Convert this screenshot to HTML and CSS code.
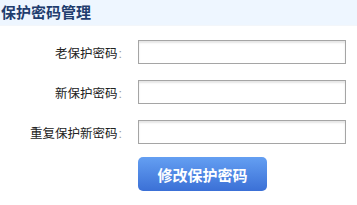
FILE: index.html
```html
<!DOCTYPE html>
<html lang="zh-CN">
<head>
  <meta charset="UTF-8" />
  <title>保护密码管理</title>
  <link rel="stylesheet" href="styles.css">
</head>
<body>
  <div class="title-bar">
    <h2>保护密码管理</h2>
  </div>

  <form class="pwd-form" onsubmit="return false;">
    <div class="row">
      <label for="oldPwd">老保护密码<span class="colon">:</span></label>
      <input type="password" id="oldPwd">
    </div>
    <div class="row">
      <label for="newPwd">新保护密码<span class="colon">:</span></label>
      <input type="password" id="newPwd">
    </div>
    <div class="row">
      <label for="rePwd">重复保护新密码<span class="colon">:</span></label>
      <input type="password" id="rePwd">
    </div>
    <div class="row">
      <span class="spacer"></span>
      <button type="submit">修改保护密码</button>
    </div>
  </form>
</body>
</html>
```

FILE: styles.css
```css
body {
  margin: 0;
  padding: 0;
  background: #fff;
  font-family: "Liberation Sans", "Noto Sans CJK SC", sans-serif;
  color: #222;
}
.title-bar {
  height: 25px;
  background: #eef6ff;
  border-bottom: 1px solid #f3f6fa;
}
.title-bar h2 {
  margin: 0;
  padding: 1px 0 0 1px;
  font-size: 15px;
  line-height: 24px;
  font-weight: bold;
  color: #1f3d6e;
}
.pwd-form {
  margin-top: 14px;
  display: flex;
  flex-direction: column;
  gap: 16px;
}
.row {
  display: flex;
  align-items: center;
  gap: 16px;
}
.row label,
.row .spacer {
  width: 122px;
  text-align: right;
  font-size: 12.5px;
  flex-shrink: 0;
}
.colon {
  color: #999;
  margin-left: 1px;
}
.row input {
  box-sizing: border-box;
  width: 208px;
  height: 24px;
  margin: 0;
  border: 1px solid #a5a5a5;
  box-shadow: inset 0 2px 2px #e6e6e6;
  background: #fff;
  padding: 2px 4px;
  font-size: 12px;
}
.row button {
  margin-top: -3px;
  width: 129px;
  height: 34px;
  border: none;
  border-radius: 5px;
  background: linear-gradient(to bottom, #649ff2, #3b70d6);
  color: #fff;
  font-family: "Noto Sans CJK SC", sans-serif;
  font-size: 15px;
  font-weight: bold;
  cursor: pointer;
}
```
